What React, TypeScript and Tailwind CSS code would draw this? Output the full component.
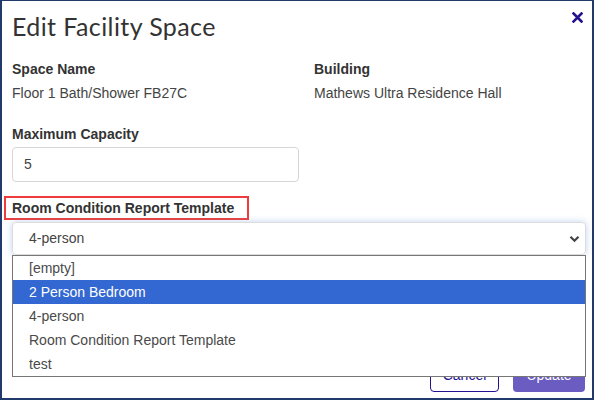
import React from 'react';

const options = ['[empty]', '2 Person Bedroom', '4-person', 'Room Condition Report Template', 'test'];

const CloseIcon = () => (
  <svg width="11" height="11" viewBox="0 0 11 11" className="block">
    <path d="M1.5 1.5 L9.5 9.5 M9.5 1.5 L1.5 9.5" stroke="#23128f" strokeWidth="2.6" strokeLinecap="square" />
  </svg>
);

const Chevron = () => (
  <svg width="11" height="8" viewBox="0 0 11 8" className="block">
    <path d="M1.5 1.8 L5.5 5.8 L9.5 1.8" stroke="#444" strokeWidth="2.2" fill="none" />
  </svg>
);

const App: React.FC = () => {
  return (
    <div className="w-[594px] h-[400px] overflow-hidden bg-white border-2 border-t border-[#1f3a6b] font-['Liberation_Sans',Arial,sans-serif] text-[#333]">
      <div className="relative pl-[10px] pr-[7px]">
        {/* header */}
        <div className="flex items-start justify-between pt-[10px]">
          <h1 className="font-['Lato',sans-serif] text-[25px] leading-[30px] text-[#333] tracking-[0.4px]">Edit Facility Space</h1>
          <button className="mt-[1px] mr-[2px] p-0">
            <CloseIcon />
          </button>
        </div>

        {/* space info */}
        <div className="grid grid-cols-[302px_1fr] mt-[20px]">
          <div>
            <div className="text-[14px] font-bold leading-[16px]">Space Name</div>
            <div className="text-[14px] leading-[16px] mt-[8px] text-[#444]">Floor 1 Bath/Shower FB27C</div>
          </div>
          <div>
            <div className="text-[14px] font-bold leading-[16px]">Building</div>
            <div className="text-[14px] leading-[16px] mt-[8px] text-[#444]">Mathews Ultra Residence Hall</div>
          </div>
        </div>

        {/* capacity */}
        <div className="mt-[25px]">
          <div className="text-[14px] font-bold leading-[16px]">Maximum Capacity</div>
          <div className="mt-[5px] w-[287px] h-[35px] border border-[#d6d6d6] rounded-[4px] flex items-center pl-[11px] text-[14px] text-[#444]">
            5
          </div>
        </div>

        {/* template */}
        <div className="mt-[14px]">
          <div className="-ml-[8px] w-[245px] h-[24px] border-2 border-[#ee3b3b] flex items-center pl-[6px]">
            <span className="text-[14px] font-bold leading-[16px]">Room Condition Report Template</span>
          </div>
          <div className="relative mt-[2px] w-[574px]">
            <div className="h-[33px] border border-[#dcdcdc] rounded-[4px] shadow-[0_0_7px_rgba(120,160,220,0.45)] flex items-center justify-between pl-[16px] pr-[5px] text-[14px] text-[#444]">
              <span>4-person</span>
              <Chevron />
            </div>

            {/* open list */}
            <div className="absolute z-10 left-0 top-[33px] w-[574px] bg-white border border-[#767676]">
              {options.map((opt, i) => (
                <div
                  key={opt}
                  className={
                    i === 1
                      ? 'h-[24px] flex items-center pl-[16px] text-[14px] bg-[#3367d1] text-white'
                      : 'h-[24px] flex items-center pl-[16px] text-[14px] text-[#4a4a4a]'
                  }
                >
                  {opt}
                </div>
              ))}
            </div>
          </div>
        </div>

        {/* footer buttons (behind list) */}
        <div className="flex justify-end gap-[14px] mt-[103px]">
          <button className="w-[69px] h-[34px] rounded-[4px] border border-[#23128f] text-[#23128f] text-[14px] bg-white">Cancel</button>
          <button className="w-[72px] h-[34px] rounded-[4px] bg-[#6a5cc1] text-white text-[14px]">Update</button>
        </div>
      </div>
    </div>
  );
};

export default App;
